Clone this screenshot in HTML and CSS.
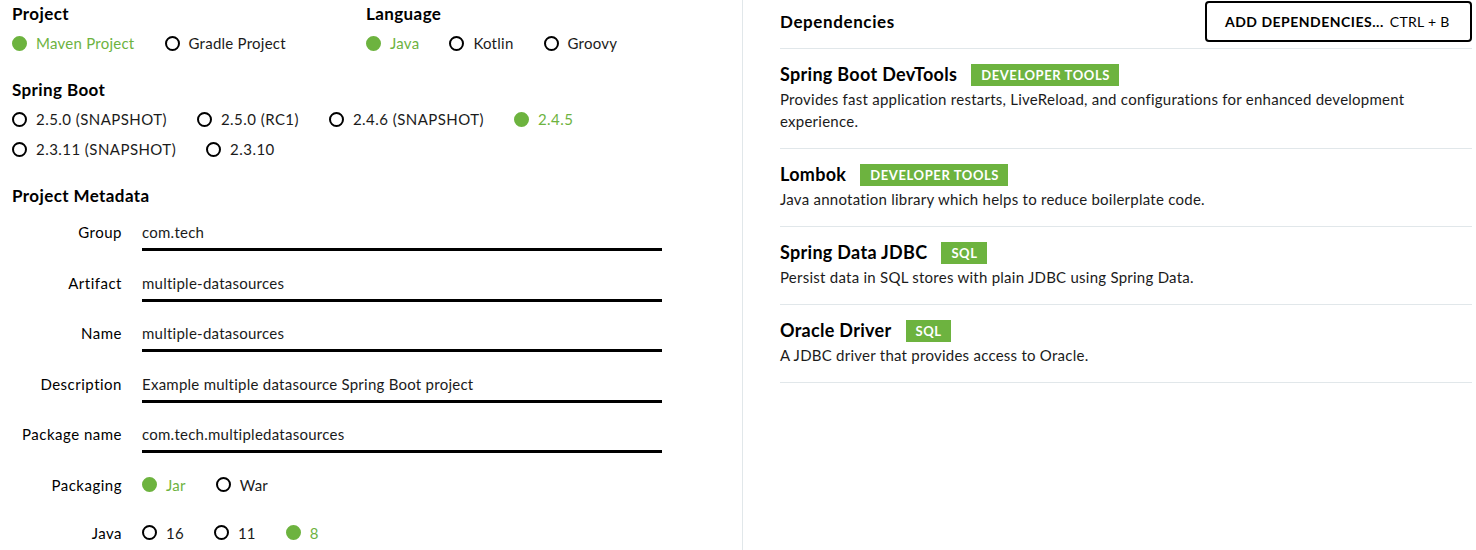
FILE: index.html
```html
<!DOCTYPE html>
<html lang="en">
<head>
  <meta charset="UTF-8">
  <meta name="viewport" content="width=device-width, initial-scale=1.0">
  <title>Spring Initializr</title>
  <link rel="stylesheet" href="styles.css">
</head>
<body>
  <div class="layout">
    <!-- Left: project options -->
    <div class="left">
      <div class="top-row">
        <div class="group">
          <div class="group-title">Project</div>
          <div class="radios">
            <label class="radio checked"><span class="dot"></span>Maven Project</label>
            <label class="radio"><span class="dot"></span>Gradle Project</label>
          </div>
        </div>
        <div class="group">
          <div class="group-title">Language</div>
          <div class="radios">
            <label class="radio checked"><span class="dot"></span>Java</label>
            <label class="radio"><span class="dot"></span>Kotlin</label>
            <label class="radio"><span class="dot"></span>Groovy</label>
          </div>
        </div>
      </div>

      <div class="group">
        <div class="group-title">Spring Boot</div>
        <div class="radios boot">
          <label class="radio"><span class="dot"></span>2.5.0 (SNAPSHOT)</label>
          <label class="radio"><span class="dot"></span>2.5.0 (RC1)</label>
          <label class="radio"><span class="dot"></span>2.4.6 (SNAPSHOT)</label>
          <label class="radio checked"><span class="dot"></span>2.4.5</label>
          <label class="radio"><span class="dot"></span>2.3.11 (SNAPSHOT)</label>
          <label class="radio"><span class="dot"></span>2.3.10</label>
        </div>
      </div>

      <div class="group">
        <div class="group-title">Project Metadata</div>
        <div class="meta">
          <div class="field">
            <label class="field-label">Group</label>
            <div class="field-input">com.tech</div>
          </div>
          <div class="field">
            <label class="field-label">Artifact</label>
            <div class="field-input">multiple-datasources</div>
          </div>
          <div class="field">
            <label class="field-label">Name</label>
            <div class="field-input">multiple-datasources</div>
          </div>
          <div class="field">
            <label class="field-label">Description</label>
            <div class="field-input">Example multiple datasource Spring Boot project</div>
          </div>
          <div class="field">
            <label class="field-label">Package name</label>
            <div class="field-input">com.tech.multipledatasources</div>
          </div>
          <div class="field field-radio">
            <label class="field-label">Packaging</label>
            <div class="radios">
              <label class="radio checked"><span class="dot"></span>Jar</label>
              <label class="radio"><span class="dot"></span>War</label>
            </div>
          </div>
          <div class="field field-radio last">
            <label class="field-label">Java</label>
            <div class="radios">
              <label class="radio"><span class="dot"></span>16</label>
              <label class="radio"><span class="dot"></span>11</label>
              <label class="radio checked"><span class="dot"></span>8</label>
            </div>
          </div>
        </div>
      </div>
    </div>

    <!-- Right: dependencies -->
    <div class="right">
      <div class="deps-header">
        <div class="deps-title">Dependencies</div>
        <button class="add-btn"><strong>ADD DEPENDENCIES...</strong> <span class="shortcut">CTRL + B</span></button>
      </div>

      <div class="dep">
        <div class="dep-title">Spring Boot DevTools <span class="badge">Developer Tools</span></div>
        <div class="dep-desc">Provides fast application restarts, LiveReload, and configurations for enhanced development experience.</div>
      </div>
      <div class="dep">
        <div class="dep-title">Lombok <span class="badge">Developer Tools</span></div>
        <div class="dep-desc">Java annotation library which helps to reduce boilerplate code.</div>
      </div>
      <div class="dep">
        <div class="dep-title">Spring Data JDBC <span class="badge">SQL</span></div>
        <div class="dep-desc">Persist data in SQL stores with plain JDBC using Spring Data.</div>
      </div>
      <div class="dep">
        <div class="dep-title">Oracle Driver <span class="badge">SQL</span></div>
        <div class="dep-desc">A JDBC driver that provides access to Oracle.</div>
      </div>
    </div>
  </div>
</body>
</html>
```

FILE: styles.css
```css
/* Global */
body {
  margin: 0;
  font-family: 'Lato', 'Liberation Sans', sans-serif;
  font-size: 15px;
  letter-spacing: 0.25px;
  color: #1b1b1b;
  background: #fff;
}

.layout {
  display: flex;
  align-items: flex-start;
}

/* Left column */
.left {
  width: 730px;
  padding: 2px 0 3px 12px;
  border-right: 1px solid #e1e7ea;
}

.top-row {
  display: grid;
  grid-template-columns: 354px auto;
}

.group {
  margin-bottom: 24px;
}

.group-title {
  font-size: 17px;
  font-weight: 700;
  line-height: 24px;
  letter-spacing: 0.4px;
  color: #000;
  margin-bottom: 6px;
}

/* Radios */
.radios {
  display: flex;
  flex-wrap: wrap;
  column-gap: 30px;
  row-gap: 8px;
}

.radios.boot {
  max-width: 620px;
  letter-spacing: 0.45px;
}

.radio {
  display: flex;
  align-items: center;
  line-height: 22px;
  color: #1b1b1b;
}

.radio .dot {
  width: 11px;
  height: 11px;
  border: 2px solid #000;
  border-radius: 50%;
  margin-right: 9px;
}

.radio.checked {
  color: #6db33f;
}

.radio.checked .dot {
  background: #6db33f;
  border-color: #6db33f;
}

/* Metadata */
.meta {
  padding-top: 7px;
}

.field {
  display: flex;
  align-items: flex-start;
  margin-bottom: 20.5px;
}

.field-label {
  width: 110px;
  margin-right: 20px;
  text-align: right;
  line-height: 22px;
  letter-spacing: 0.5px;
  color: #000;
}

.field-input {
  width: 520px;
  line-height: 22px;
  padding-bottom: 5px;
  border-bottom: 3px solid #000;
}

.field-radio {
  margin-bottom: 26px;
}

.field-radio.last {
  margin-bottom: 0;
}

/* Right column */
.right {
  flex: 1;
  padding: 0 4px 0 37px;
}

.deps-header {
  display: flex;
  justify-content: space-between;
  align-items: center;
  padding: 1px 0 6px;
  border-bottom: 1px solid #e1e7ea;
}

.deps-title {
  font-size: 17px;
  font-weight: 700;
  letter-spacing: 0.6px;
  color: #000;
}

.add-btn {
  font-family: inherit;
  font-size: 14px;
  letter-spacing: 0.5px;
  white-space: nowrap;
  color: #000;
  background: #fff;
  border: 2px solid #000;
  border-radius: 4px;
  height: 41px;
  width: 267px;
  padding: 0 0 0 18px;
  text-align: left;
}

.add-btn .shortcut {
  margin-left: 2px;
  letter-spacing: 0.3px;
}

.dep {
  padding: 13px 0 16px;
  border-bottom: 1px solid #e1e7ea;
}

.dep-title {
  display: flex;
  align-items: flex-end;
  height: 24px;
  font-size: 18px;
  font-weight: 700;
  line-height: 24px;
  letter-spacing: 0.3px;
  color: #000;
}

.badge {
  margin-left: 14px;
  padding: 0 9px 0 10px;
  height: 22px;
  line-height: 22px;
  background: #6db33f;
  color: #fff;
  font-size: 13px;
  font-weight: 700;
  letter-spacing: 0.6px;
  text-transform: uppercase;
}

.dep-desc {
  margin-top: 2px;
  line-height: 22px;
  max-width: 640px;
}
```
